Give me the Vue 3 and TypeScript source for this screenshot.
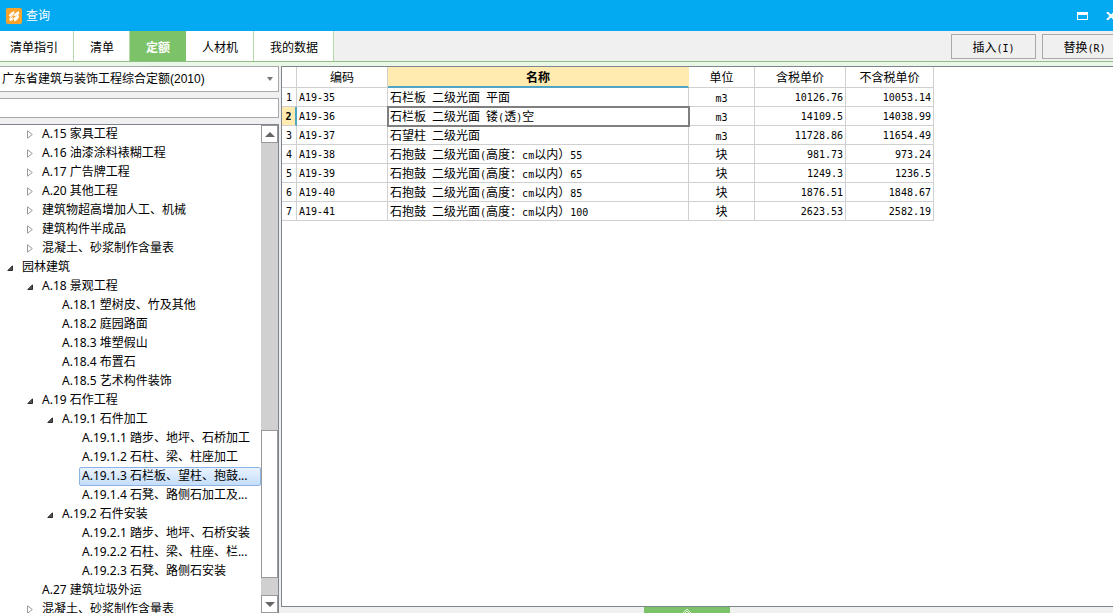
<script setup lang="ts">
import { ref } from 'vue'

type TreeRow = { level: number; text: string; state?: 'open' | 'closed' }
type QuotaRow = { code: string; name: string; unit: string; taxed: string; untaxed: string }

const tabs = ['清单指引', '清单', '定额', '人材机', '我的数据']
const activeTab = ref('定额')
const library = ref('广东省建筑与装饰工程综合定额(2010)')
const keyword = ref('')
const selectedNode = ref('A.19.1.3 石栏板、望柱、抱鼓...')
const selectedRow = ref(1)

const tree: TreeRow[] = [
  { level: 1, text: 'A.15 家具工程', state: 'closed' },
  { level: 1, text: 'A.16 油漆涂料裱糊工程', state: 'closed' },
  { level: 1, text: 'A.17 广告牌工程', state: 'closed' },
  { level: 1, text: 'A.20 其他工程', state: 'closed' },
  { level: 1, text: '建筑物超高增加人工、机械', state: 'closed' },
  { level: 1, text: '建筑构件半成品', state: 'closed' },
  { level: 1, text: '混凝土、砂浆制作含量表', state: 'closed' },
  { level: 0, text: '园林建筑', state: 'open' },
  { level: 1, text: 'A.18 景观工程', state: 'open' },
  { level: 2, text: 'A.18.1 塑树皮、竹及其他' },
  { level: 2, text: 'A.18.2 庭园路面' },
  { level: 2, text: 'A.18.3 堆塑假山' },
  { level: 2, text: 'A.18.4 布置石' },
  { level: 2, text: 'A.18.5 艺术构件装饰' },
  { level: 1, text: 'A.19 石作工程', state: 'open' },
  { level: 2, text: 'A.19.1 石件加工', state: 'open' },
  { level: 3, text: 'A.19.1.1 踏步、地坪、石桥加工' },
  { level: 3, text: 'A.19.1.2 石柱、梁、柱座加工' },
  { level: 3, text: 'A.19.1.3 石栏板、望柱、抱鼓...' },
  { level: 3, text: 'A.19.1.4 石凳、路侧石加工及...' },
  { level: 2, text: 'A.19.2 石件安装', state: 'open' },
  { level: 3, text: 'A.19.2.1 踏步、地坪、石桥安装' },
  { level: 3, text: 'A.19.2.2 石柱、梁、柱座、栏...' },
  { level: 3, text: 'A.19.2.3 石凳、路侧石安装' },
  { level: 1, text: 'A.27 建筑垃圾外运' },
  { level: 1, text: '混凝土、砂浆制作含量表', state: 'closed' },
]

const rows: QuotaRow[] = [
  { code: 'A19-35', name: '石栏板 二级光面 平面', unit: 'm3', taxed: '10126.76', untaxed: '10053.14' },
  { code: 'A19-36', name: '石栏板 二级光面 镂(透)空', unit: 'm3', taxed: '14109.5', untaxed: '14038.99' },
  { code: 'A19-37', name: '石望柱 二级光面', unit: 'm3', taxed: '11728.86', untaxed: '11654.49' },
  { code: 'A19-38', name: '石抱鼓 二级光面(高度：cm以内）55', unit: '块', taxed: '981.73', untaxed: '973.24' },
  { code: 'A19-39', name: '石抱鼓 二级光面(高度：cm以内）65', unit: '块', taxed: '1249.3', untaxed: '1236.5' },
  { code: 'A19-40', name: '石抱鼓 二级光面(高度：cm以内）85', unit: '块', taxed: '1876.51', untaxed: '1848.67' },
  { code: 'A19-41', name: '石抱鼓 二级光面(高度：cm以内）100', unit: '块', taxed: '2623.53', untaxed: '2582.19' },
]

/** Splits a label into half-width and full-width runs so each gets its own type size. */
function runs(text: string): { text: string; half: boolean }[] {
  const parts = text.match(/[\x20-\x7e]+|[^\x20-\x7e]+/g) ?? []
  return parts.map((part) => ({ text: part, half: part.charCodeAt(0) < 127 }))
}
</script>

<template>
  <div class="window">
    <header class="titlebar">
      <svg class="logo" viewBox="0 0 16 16" aria-hidden="true">
        <rect width="16" height="16" rx="2" fill="#f7a32a" />
        <path d="M2.500 8C4 5.500 6 3.500 8.500 3L8 5.500 4.500 8.500zM8 7l4.500-4 1 2.500L9 8.500zM3 10.500L7 9l-1 3.500-2 .5zM8 10l5-3c.3 3-1.500 5.500-5 6.500z" fill="#fff" />
        <path d="M4 9.500L11 4.500M6 12l6-5" stroke="#fff" stroke-width="1" />
      </svg>
      <h1>查询</h1>
      <button class="sys" type="button" aria-label="最大化">
        <svg width="11" height="8" viewBox="0 0 11 8"><path d="M0 0h11v8H0zM1 3v4h9V3z" fill="#fff" fill-rule="evenodd" /></svg>
      </button>
      <button class="sys close" type="button" aria-label="关闭">
        <svg width="10" height="8" viewBox="0 0 10 8"><path d="M1 0l8 8M9 0L1 8" stroke="#fff" stroke-width="2" /></svg>
      </button>
    </header>

    <div class="toolbar">
      <nav class="tabs">
        <button
          v-for="tab in tabs"
          :key="tab"
          type="button"
          class="tab"
          :class="{ active: tab === activeTab }"
          @click="activeTab = tab"
        >{{ tab }}</button>
      </nav>
      <div class="actions">
        <button type="button" class="action">插入<span class="half">(I)</span></button>
        <button type="button" class="action">替换<span class="half">(R)</span></button>
      </div>
    </div>

    <main class="body">
      <aside class="side">
        <div class="combo">
          <select v-model="library" aria-label="定额库">
            <option>广东省建筑与装饰工程综合定额(2010)</option>
          </select>
          <svg class="arrow" width="6" height="4" viewBox="0 0 6 4" aria-hidden="true"><path d="M0 0h6L3 4z" fill="#777" /></svg>
        </div>
        <input v-model="keyword" class="search" type="text" aria-label="搜索" />
        <div class="treebox">
          <ul class="tree">
            <li v-for="(node, i) in tree" :key="i" :class="'level' + node.level">
              <span class="toggle">
                <svg v-if="node.state === 'closed'" width="6" height="9" viewBox="0 0 6 9"><path d="M.5.8v7.400L5.300 4.500z" fill="#fff" stroke="#9a9a9a" /></svg>
                <svg v-else-if="node.state === 'open'" width="6" height="6" viewBox="0 0 6 6"><path d="M5.500.8v4.700H.8z" fill="#555" stroke="#2a2a2a" /></svg>
              </span>
              <button
                type="button"
                class="node"
                :class="{ selected: node.text === selectedNode }"
                @click="selectedNode = node.text"
              >{{ node.text }}</button>
            </li>
          </ul>
          <div class="scrollbar">
            <button type="button" class="step" aria-label="向上滚动">
              <svg width="10" height="5" viewBox="0 0 10 5"><path d="M0 5h10L5 0z" fill="#666" /></svg>
            </button>
            <div class="track"><div class="thumb"></div></div>
            <button type="button" class="step" aria-label="向下滚动">
              <svg width="10" height="5" viewBox="0 0 10 5"><path d="M0 0h10L5 5z" fill="#666" /></svg>
            </button>
          </div>
        </div>
      </aside>

      <section class="content">
        <div class="sheet">
          <table>
            <colgroup>
              <col class="c-num" /><col class="c-code" /><col class="c-name" /><col class="c-unit" /><col class="c-taxed" /><col class="c-untaxed" />
            </colgroup>
            <thead>
              <tr>
                <th aria-label="序号"></th>
                <th>编码</th>
                <th class="sorted">名称</th>
                <th>单位</th>
                <th>含税单价</th>
                <th>不含税单价</th>
              </tr>
            </thead>
            <tbody>
              <tr v-for="(row, i) in rows" :key="row.code" :class="{ current: i === selectedRow }" @click="selectedRow = i">
                <th class="half num" scope="row">{{ i + 1 }}</th>
                <td class="half">{{ row.code }}</td>
                <td class="name"><span v-for="(run, k) in runs(row.name)" :key="k" :class="{ half: run.half }">{{ run.text }}</span></td>
                <td class="unit"><span v-for="(run, k) in runs(row.unit)" :key="k" :class="{ half: run.half }">{{ run.text }}</span></td>
                <td class="half price">{{ row.taxed }}</td>
                <td class="half price">{{ row.untaxed }}</td>
              </tr>
            </tbody>
          </table>
        </div>
        <button type="button" class="drawer" aria-label="展开">
          <svg width="10" height="6" viewBox="0 0 10 6"><path d="M1 6l4-4 4 4M3 6l2-2 2 2" fill="none" stroke="#e4f5dc" /></svg>
        </button>
      </section>
    </main>
  </div>
</template>

<style>
body {
  margin: 0;
}
</style>

<style scoped>
* {
  box-sizing: border-box;
}
.window {
  display: flex;
  flex-direction: column;
  height: 100vh;
  overflow: hidden;
  background: #f0f0f0;
  color: #000;
  font: 12px/18px "Liberation Sans", "Noto Sans CJK SC", sans-serif;
}
button,
input,
select {
  margin: 0;
  padding: 0;
  border: 0;
  border-radius: 0;
  background: none;
  color: inherit;
  font: inherit;
}
svg {
  display: block;
}
.half {
  font-family: "DejaVu Sans Mono", monospace;
  font-size: 10px;
  white-space: pre;
}
span.half {
  line-height: 12px;
}
.titlebar {
  display: flex;
  flex: none;
  align-items: center;
  height: 31px;
  padding-left: 6px;
  background: #03a9f1;
  color: #fff;
}
.logo {
  width: 16px;
  height: 16px;
}
h1 {
  flex: 1;
  margin: 0 0 0 4px;
  font-size: 12px;
  font-weight: 400;
}
.sys {
  flex: none;
  padding: 8px 9px;
}
.close {
  margin-right: -12px;
}
.toolbar {
  display: flex;
  flex: none;
  justify-content: space-between;
  height: 31px;
  border-bottom: 1px solid #8fbf87;
}
.tabs {
  display: flex;
}
.tab {
  padding: 4px 15px 0 16px;
  border-right: 1px solid #b5dbaa;
  background: #fff;
}
.tab:first-child {
  padding-left: 10px;
}
.tab.active {
  border-right-color: #7cc268;
  background: #7cc268;
  color: #fff;
  font-weight: 700;
}
.actions {
  display: flex;
  gap: 6px;
  padding: 3px 0 2px;
  margin-right: -14px;
}
.action {
  width: 85px;
  padding-top: 2px;
  border: 1px solid #a9a9a9;
}
.body {
  display: flex;
  flex: 1;
  min-height: 0;
  padding-top: 4px;
  gap: 2px;
  background: linear-gradient(#eaf6e6 4px, #f0f0f0 4px);
}
.side {
  display: flex;
  flex: none;
  flex-direction: column;
  gap: 6px;
  width: 279px;
}
.combo {
  display: grid;
  flex: none;
  align-items: center;
  height: 26px;
  border: 1px solid #a5a8ad;
  border-left: 0;
  background: #fff;
}
.combo > * {
  grid-area: 1 / 1;
}
.combo select {
  width: 100%;
  height: 24px;
  padding-left: 2px;
  appearance: none;
}
.arrow {
  justify-self: end;
  margin-right: 5px;
  pointer-events: none;
}
.search {
  flex: none;
  height: 20px;
  padding: 0 2px;
  border: 1px solid #a5a8ad;
  border-left: 0;
  background: #fff;
}
.treebox {
  display: flex;
  flex: 1;
  min-height: 0;
  border: 1px solid #7f858d;
  border-width: 1px 1px 0 0;
  background: #fff;
}
.tree {
  flex: 1;
  min-width: 0;
  margin: 0;
  padding: 0;
  overflow: hidden;
  list-style: none;
  font-family: "Noto Sans", "Noto Sans CJK SC", sans-serif;
}
.tree li {
  display: flex;
  align-items: center;
  height: 19px;
}
.toggle {
  display: flex;
  flex: none;
  justify-content: center;
  width: 19px;
}
.level1 {
  padding-left: 20px;
}
.level2 {
  padding-left: 40px;
}
.level3 {
  padding-left: 60px;
}
.node {
  height: 19px;
  padding: 0 2px 2px;
  border: 1px solid transparent;
  border-radius: 2px;
  line-height: 15px;
  text-align: left;
  white-space: nowrap;
}
.node.selected {
  flex: 1;
  border-color: #8ab4e4;
  background: linear-gradient(#eaf3fe, #c4ddfb);
}
.scrollbar {
  display: flex;
  flex: none;
  flex-direction: column;
  width: 17px;
}
.step {
  display: flex;
  flex: none;
  align-items: center;
  justify-content: center;
  height: 18px;
  border: 1px solid #999;
  background: #fff;
}
.track {
  display: flex;
  flex: 1;
  flex-direction: column;
  justify-content: flex-end;
  padding-bottom: 17px;
  background: #d0d0d0;
}
.thumb {
  height: 34%;
  border: 1px solid #999;
  background: #fff;
}
.content {
  display: flex;
  flex: 1;
  flex-direction: column;
  min-width: 0;
}
.sheet {
  flex: 1;
  min-height: 0;
  border: 1px solid #7f858d;
  border-right: 0;
  background: #fff;
}
table {
  width: 652px;
  border-collapse: separate;
  border-spacing: 0;
  table-layout: fixed;
}
.c-num {
  width: 15px;
}
.c-code,
.c-taxed {
  width: 91px;
}
.c-name {
  width: 301px;
}
.c-unit {
  width: 66px;
}
.c-untaxed {
  width: 88px;
}
th,
td {
  height: 19px;
  padding: 2px 2px 0;
  border: 1px solid #d0d0d0;
  border-width: 0 1px 1px 0;
  font-weight: 400;
  line-height: 16px;
  text-align: left;
  white-space: nowrap;
}
td.half,
th.half {
  padding-top: 1px;
}
thead th {
  height: 21px;
  text-align: center;
}
thead .sorted {
  border-bottom: 2px solid #4fa3c4;
  border-right-color: #ffeab0;
  background: #ffeab0;
  font-weight: 700;
}
th.num {
  padding-right: 0;
  padding-left: 0;
  text-align: center;
}
.unit {
  text-align: center;
}
.price {
  text-align: right;
}
.current .num {
  border-right: 2px solid #4fa3c4;
  background: #ffeab0;
  font-weight: 700;
}
.current .name {
  outline: 2px solid #7f7f7f;
  outline-offset: -1px;
}
.drawer {
  display: flex;
  flex: none;
  align-items: flex-end;
  align-self: center;
  justify-content: center;
  width: 86px;
  height: 6px;
  margin-right: 20px;
  background: #7cc268;
}
</style>
